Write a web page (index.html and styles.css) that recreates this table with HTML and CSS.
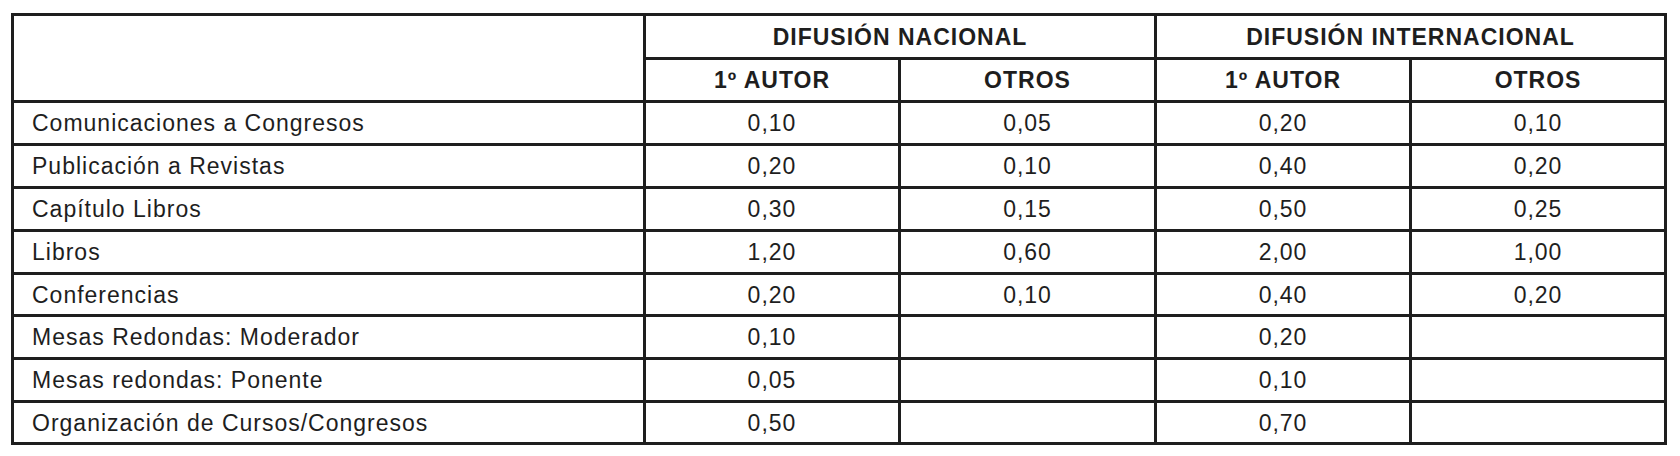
FILE: index.html
```html
<!DOCTYPE html>
<html lang="es">
<head>
<meta charset="utf-8">
<title>Baremo</title>
<link rel="stylesheet" href="styles.css">
</head>
<body>
<table class="grid">
  <colgroup>
    <col class="c-label">
    <col class="c-val">
    <col class="c-val3">
    <col class="c-val">
    <col class="c-val">
  </colgroup>
  <thead>
    <tr class="h1">
      <th rowspan="2" class="blank"></th>
      <th colspan="2">DIFUSIÓN NACIONAL</th>
      <th colspan="2">DIFUSIÓN INTERNACIONAL</th>
    </tr>
    <tr class="h2">
      <th>1º AUTOR</th>
      <th>OTROS</th>
      <th>1º AUTOR</th>
      <th>OTROS</th>
    </tr>
  </thead>
  <tbody>
    <tr class="r43"><td class="label">Comunicaciones a Congresos</td><td>0,10</td><td>0,05</td><td>0,20</td><td>0,10</td></tr>
    <tr class="r43"><td class="label">Publicación a Revistas</td><td>0,20</td><td>0,10</td><td>0,40</td><td>0,20</td></tr>
    <tr class="r43"><td class="label">Capítulo Libros</td><td>0,30</td><td>0,15</td><td>0,50</td><td>0,25</td></tr>
    <tr class="r43"><td class="label">Libros</td><td>1,20</td><td>0,60</td><td>2,00</td><td>1,00</td></tr>
    <tr class="r42"><td class="label">Conferencias</td><td>0,20</td><td>0,10</td><td>0,40</td><td>0,20</td></tr>
    <tr class="r43"><td class="label">Mesas Redondas: Moderador</td><td>0,10</td><td></td><td>0,20</td><td></td></tr>
    <tr class="r43"><td class="label">Mesas redondas: Ponente</td><td>0,05</td><td></td><td>0,10</td><td></td></tr>
    <tr class="r42"><td class="label">Organización de Cursos/Congresos</td><td>0,50</td><td></td><td>0,70</td><td></td></tr>
  </tbody>
</table>
</body>
</html>
```

FILE: styles.css
```css
html, body {
  background: #ffffff;
}
body {
  margin: 13px 0 0 11px;
  font-family: "Liberation Sans", Arial, Helvetica, sans-serif;
  color: #1e1e1e;
}
.grid {
  border-collapse: separate;
  border-spacing: 0;
  table-layout: fixed;
  width: 1656px;
  border-left: 3px solid #1e1e1e;
  border-top: 3px solid #1e1e1e;
}
.c-label { width: 632px; }
.c-val { width: 255px; }
.c-val3 { width: 256px; }
.grid th,
.grid td {
  box-sizing: border-box;
  border-right: 3px solid #1e1e1e;
  border-bottom: 3px solid #1e1e1e;
  padding: 0;
  text-align: center;
  vertical-align: middle;
  font-size: 23px;
  letter-spacing: 1px;
  line-height: 24px;
}
.grid th {
  font-weight: bold;
  letter-spacing: 1px;
}
.h1 th { height: 44px; }
.h2 th { height: 43px; }
.r43 td { height: 43px; }
.r42 td { height: 42px; }
.grid td.label {
  text-align: left;
  padding-left: 18px;
}
```
